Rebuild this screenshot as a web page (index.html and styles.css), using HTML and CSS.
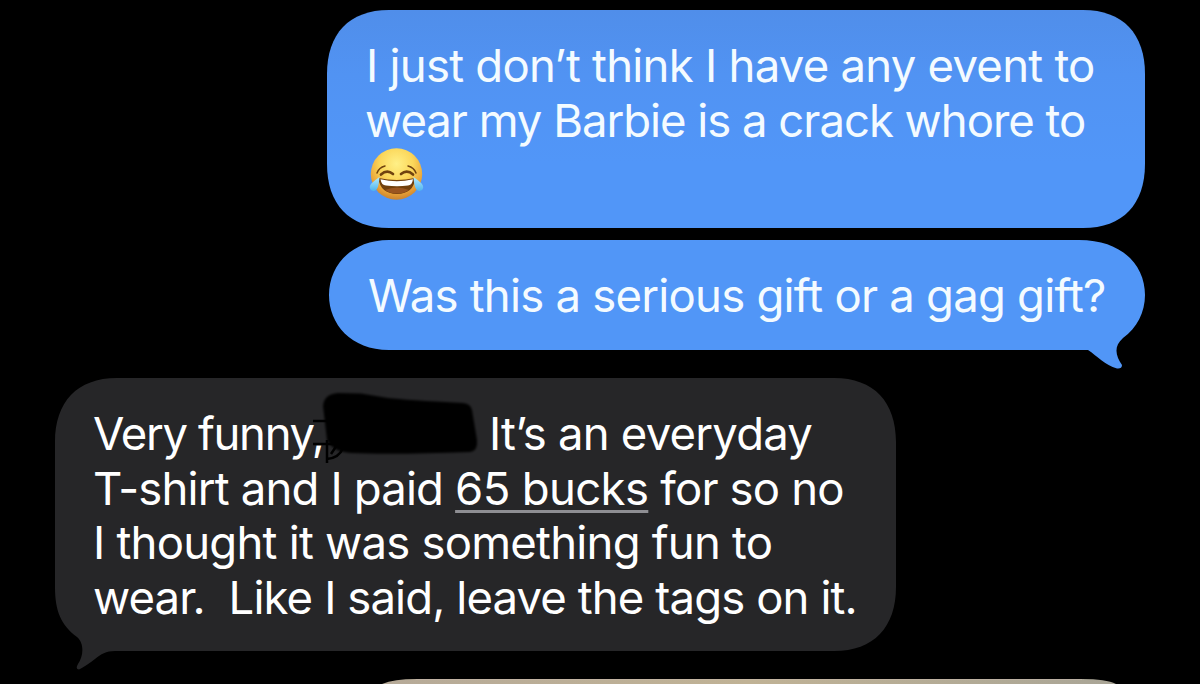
FILE: index.html
```html
<!DOCTYPE html>
<html lang="en">
<head>
<meta charset="utf-8">
<title>Messages</title>
<link rel="stylesheet" href="styles.css">
</head>
<body>
<main class="thread">
  <section class="bubble sent first">
    <svg class="shape" width="818" height="218" viewBox="0 0 818 218">
      <defs><linearGradient id="sky" x1="0" y1="0" x2="0" y2="1"><stop offset="0" stop-color="#508eea"/><stop offset=".3" stop-color="#5193f3"/><stop offset=".7" stop-color="#5196f8"/></linearGradient></defs>
      <path fill="url(#sky)" d="M62 0H756C796 0 818 24 818 64V154C818 194 796 218 756 218H62C22 218 0 194 0 154V64C0 24 22 0 62 0Z"/>
    </svg>
    <p class="line l1">I just don’t think I have any event to</p>
    <p class="line l2">wear my Barbie is a crack whore to</p>
    <p class="line emoji">
      <svg width="56" height="54" viewBox="0 0 56 54" role="img" aria-label="😂">
        <defs>
          <radialGradient id="face" cx=".5" cy=".3" r=".72"><stop offset="0" stop-color="#fff087"/><stop offset=".45" stop-color="#fbd75a"/><stop offset=".8" stop-color="#e9a136"/><stop offset="1" stop-color="#c47f30"/></radialGradient>
          <linearGradient id="tear" x1="0" y1="0" x2="0" y2="1"><stop offset="0" stop-color="#b5ecfb"/><stop offset="1" stop-color="#4db4f0"/></linearGradient>
        </defs>
        <circle cx="27.500" cy="27" r="25.700" fill="url(#face)"/>
        <g fill="none" stroke="#70430f" stroke-linecap="round">
          <path stroke-width="1.500" d="M8 26Q10 20.500 16 19M47 26Q45 20.500 39 19"/>
          <path stroke-width="2.700" d="M12 27.500Q18 22 24 27M32 27Q38 22 44 27.500"/>
        </g>
        <path fill="#71400c" d="M9.500 31Q28 35 46 31Q45 46.500 28 47Q11 46.500 9.500 31Z"/>
        <path fill="#fff" d="M11.500 32.300Q28 36 44 32.300Q43 38.500 39 38.500Q28 40 17 38.500Q12.500 38.500 11.500 32.300Z"/>
        <path fill="#9a5520" d="M16 43Q28 38 40 43Q35 46.500 28 46.500T16 43Z"/>
        <path fill="url(#tear)" d="M10.500 30C10 37 9 44 4.500 44C-.5 43.500 0 38 3.500 35.500Q6 33 10.500 30ZM44.500 30C45 37 46 44 50.500 44C55.500 43.500 55 38 51.500 35.500Q49 33 44.500 30Z"/>
      </svg>
    </p>
  </section>

  <section class="bubble sent second">
    <svg class="shape" width="816" height="129" viewBox="0 0 816 129">
      <path fill="#5196f7" d="M60 0H750C794 0 816 26 816 55C816 72 808 88 794 98C784 107 787 116 793 125Q793 129 788 128.500C776 125 768 116 759 110H60C22 110 0 84 0 55C0 26 22 0 60 0Z"/>
    </svg>
    <p class="line l3">Was this a serious gift or a gag gift?</p>
  </section>

  <section class="bubble received">
    <svg class="shape" width="841" height="292" viewBox="0 0 841 292">
      <path fill="#262628" d="M62 0H779C819 0 841 24 841 64V209C841 249 819 273 779 273H60C51 273 46 276 40 281Q31 288 24 291.500Q20 291 23 286C28 279 30 266 22 259C6 247 0 233 0 209V64C0 24 22 0 62 0Z"/>
    </svg>
    <p class="line l4"><span class="lead">Very funny,</span><span>It’s an everyday</span></p>
    <p class="line l5">T-shirt and I paid <span class="link">65 bucks</span> for so no</p>
    <p class="line l6">I thought it was something fun to</p>
    <p class="line l7">wear.&nbsp; Like I said, leave the tags on it.</p>
    <svg class="scribble" width="180" height="90" viewBox="0 0 180 90">
      <defs><filter id="soft"><feGaussianBlur stdDeviation="1.300"/></filter></defs>
      <path filter="url(#soft)" d="M12 26Q13 14 27 13L50 13.500L77 18Q95 20 152 23Q160 24 161 30L166 60Q167 71 159 72Q80 75 40 73Q22 72 16 60Z"/>
      <path fill="none" stroke="#000" stroke-width="2.500" d="M2 41H18M2 64H22M16 60L16 83M16 79Q28 78 32 68M20 74L26 65"/>
    </svg>
  </section>

  <svg class="photo" width="740" height="5" viewBox="0 0 740 5">
    <defs><linearGradient id="sand"><stop offset="0" stop-color="#b6aa98"/><stop offset=".5" stop-color="#c0b295"/><stop offset="1" stop-color="#a9a596"/></linearGradient></defs>
    <path fill="url(#sand)" d="M0 5Q12 0 34 0H700Q724 0 734 5Z"/>
    <path fill="none" stroke="#c9bab0" stroke-opacity=".5" d="M34 .5H700"/>
  </svg>
</main>
</body>
</html>
```
FILE: styles.css
```css
body {
  margin: 0;
  background: #000;
  overflow: hidden;
}

.thread {
  display: flex;
  flex-direction: column;
  width: 1200px;
  height: 684px;
  box-sizing: border-box;
  padding-top: 10px;
  overflow: hidden;
}

.bubble {
  position: relative;
  box-sizing: border-box;
  flex: none;
  padding: 29px 39px 0;
  color: #fff;
}

.sent { color: #f4fbff; }

.first {
  width: 818px;
  height: 218px;
  margin-left: 327px;
}

.second {
  width: 816px;
  height: 109px;
  margin: 12px 0 0 329px;
}

.received {
  width: 841px;
  height: 273px;
  margin: 29px 0 0 55px;
  padding-left: 38px;
}

.shape {
  position: absolute;
  left: 0;
  top: 0;
}

.line {
  position: relative;
  width: max-content;
  margin: 0;
  height: 54.500px;
  font: 400 45.500px/54.500px Inter, "Liberation Sans", sans-serif;
  white-space: nowrap;
}

.l1 { letter-spacing: -0.76px; }
.l2 { margin-left: -1px; letter-spacing: -1.03px; }
.l3 { letter-spacing: -0.78px; }
.l4 { display: flex; letter-spacing: -0.8px; }
.l5 { letter-spacing: -0.84px; }
.l6 { letter-spacing: -0.78px; }
.l7 { letter-spacing: -0.9px; }

.lead {
  width: 396px;
  letter-spacing: -1.35px;
}

.emoji svg {
  display: block;
  margin: -1px 0 0 3px;
}

.link {
  letter-spacing: -0.65px;
  text-decoration: underline;
  text-decoration-color: #8e8e93;
  text-decoration-thickness: 3px;
  text-underline-offset: 5px;
  text-decoration-skip-ink: none;
}

.scribble {
  position: absolute;
  left: 256px;
  top: 2px;
}

.photo {
  display: block;
  flex: none;
  margin: 28px 0 0 382px;
}
```
